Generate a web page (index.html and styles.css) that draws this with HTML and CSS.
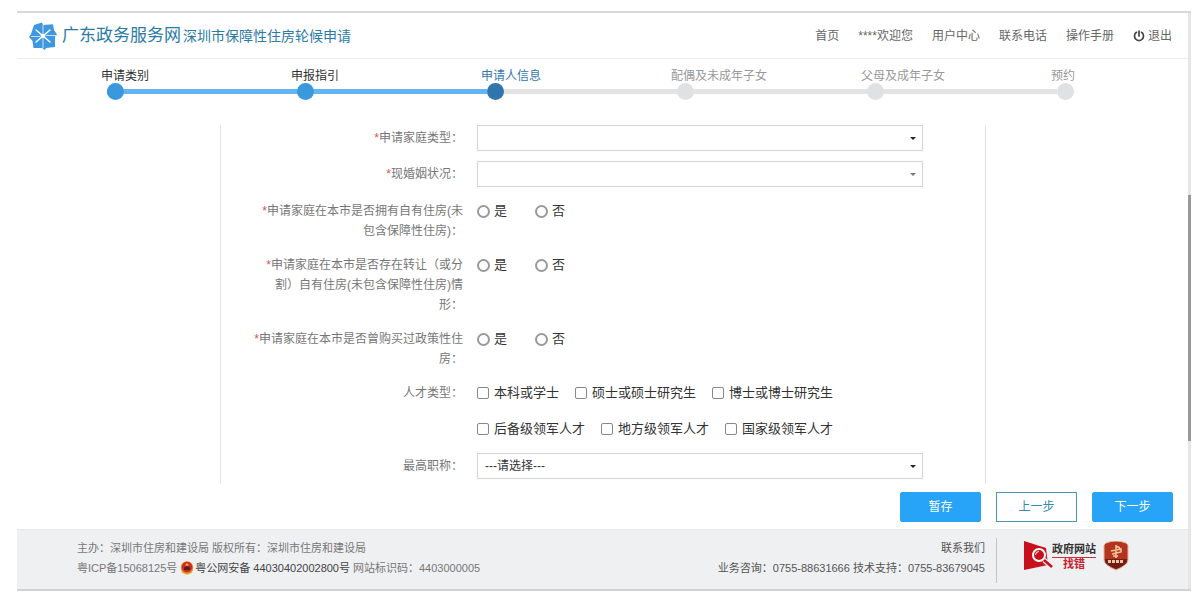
FILE: index.html
```
<!DOCTYPE html>
<html lang="zh-CN">
<head>
<meta charset="utf-8">
<title>深圳市保障性住房轮候申请</title>
<link rel="stylesheet" href="styles.css">
</head>
<body>
<div class="window">
  <div class="page">
    <header class="header">
      <div class="brand">
        <svg class="brand-logo" viewBox="0 0 28 28" aria-hidden="true">
          <path fill="#3f97e0" d="M5 3 13 .5 14 3 24 2.300 25 8 28 12.500 26 14.500V25l-9 1-1 2-3-2H4.500L3.500 19 0 15l2-3z"/>
          <path stroke="#fff" stroke-width=".7" d="M14 3v8M14 17v9M2 14.500h9M17 13.500h10"/>
          <path stroke="#fff" stroke-width="1.400" stroke-linecap="round" d="m7 8 14 12M21 8 7 20"/>
          <circle cx="14" cy="14" r="2.400" fill="#fff"/>
        </svg>
        <span class="brand-name">广东政务服务网</span>
        <h1 class="brand-title">深圳市保障性住房轮候申请</h1>
      </div>
      <nav class="nav">
        <a href="#">首页</a>
        <a href="#">****欢迎您</a>
        <a href="#">用户中心</a>
        <a href="#">联系电话</a>
        <a href="#">操作手册</a>
        <a href="#" class="logout"><svg class="power" viewBox="0 0 12 12" aria-hidden="true"><path d="M3.500 2.300a4.500 4.500 0 1 0 5 0M6 1v5" fill="none" stroke="#444" stroke-width="1.700" stroke-linecap="round"/></svg>退出</a>
      </nav>
    </header>

    <ol class="steps">
      <li class="step done"><span class="step-label">申请类别</span><span class="track"><i class="dot"></i></span></li>
      <li class="step done"><span class="step-label">申报指引</span><span class="track"><i class="dot"></i></span></li>
      <li class="step current"><span class="step-label">申请人信息</span><span class="track"><i class="dot"></i></span></li>
      <li class="step"><span class="step-label">配偶及未成年子女</span><span class="track"><i class="dot"></i></span></li>
      <li class="step"><span class="step-label">父母及成年子女</span><span class="track"><i class="dot"></i></span></li>
      <li class="step last"><span class="step-label">预约</span><span class="track"><i class="dot"></i></span></li>
    </ol>

    <main class="main">
      <form class="form" id="apply">
        <div class="row tight">
          <label class="label" for="family"><b>*</b>申请家庭类型：</label>
          <div class="select"><select id="family"><option></option></select><svg class="caret" viewBox="0 0 6 3" aria-hidden="true"><path d="M0 0h6L3 3z"/></svg></div>
        </div>
        <div class="row">
          <label class="label" for="marriage"><b>*</b>现婚姻状况：</label>
          <div class="select"><select id="marriage"><option></option></select><svg class="caret muted" viewBox="0 0 6 3" aria-hidden="true"><path d="M0 0h6L3 3z"/></svg></div>
        </div>
        <div class="row" role="radiogroup" aria-labelledby="q1">
          <span class="label" id="q1"><b>*</b>申请家庭在本市是否拥有自有住房(未包含保障性住房)：</span>
          <div class="radios"><label class="choice"><input type="radio" name="own">是</label><label class="choice"><input type="radio" name="own">否</label></div>
        </div>
        <div class="row" role="radiogroup" aria-labelledby="q2">
          <span class="label" id="q2"><b>*</b>申请家庭在本市是否存在转让（或分割）自有住房(未包含保障性住房)情形：</span>
          <div class="radios"><label class="choice"><input type="radio" name="transfer">是</label><label class="choice"><input type="radio" name="transfer">否</label></div>
        </div>
        <div class="row" role="radiogroup" aria-labelledby="q3">
          <span class="label" id="q3"><b>*</b>申请家庭在本市是否曾购买过政策性住房：</span>
          <div class="radios"><label class="choice"><input type="radio" name="policy">是</label><label class="choice"><input type="radio" name="policy">否</label></div>
        </div>
        <div class="row" role="group" aria-labelledby="q4">
          <span class="label" id="q4">人才类型：</span>
          <div class="checks">
            <div class="check-line"><label class="choice"><input type="checkbox">本科或学士</label><label class="choice"><input type="checkbox">硕士或硕士研究生</label><label class="choice"><input type="checkbox">博士或博士研究生</label></div>
            <div class="check-line"><label class="choice"><input type="checkbox">后备级领军人才</label><label class="choice"><input type="checkbox">地方级领军人才</label><label class="choice"><input type="checkbox">国家级领军人才</label></div>
          </div>
        </div>
        <div class="row">
          <label class="label" for="title">最高职称：</label>
          <div class="select"><select id="title"><option>---请选择---</option></select><svg class="caret" viewBox="0 0 6 3" aria-hidden="true"><path d="M0 0h6L3 3z"/></svg></div>
        </div>
      </form>
      <div class="actions">
        <button class="btn" type="button">暂存</button>
        <button class="btn outline" type="button">上一步</button>
        <button class="btn" type="submit" form="apply">下一步</button>
      </div>
    </main>

    <footer class="footer">
      <div class="legal">
        <p>主办：深圳市住房和建设局 版权所有：深圳市住房和建设局</p>
        <p class="records"><span>粤ICP备15068125号</span>
          <a class="police" href="#"><svg class="police-badge" viewBox="0 0 14 14" aria-hidden="true"><path d="M1 8h12l-1 4-5 2-5-2z" fill="#f0bd4a"/><circle cx="7" cy="6.500" r="6.200" fill="#d98a2f"/><circle cx="7" cy="6" r="5.200" fill="#d02a1c"/><path d="M4 9V6.500L7 5l3 1.500V9z" fill="#5a1b2a"/><path d="M5 4.500 7 2l2 2.500z" fill="#f4c542"/></svg>粤公网安备 44030402002800号</a>
          <span>网站标识码：4403000005</span></p>
      </div>
      <div class="contact">
        <p>联系我们</p>
        <p>业务咨询：0755-88631666 技术支持：0755-83679045</p>
      </div>
      <div class="marks">
        <a class="report" href="#">
          <svg class="report-icon" viewBox="0 0 30 30" aria-hidden="true"><path d="M0 0 22 7 24 24 0 29z" fill="#c8101c"/><circle cx="15" cy="14" r="6" fill="none" stroke="#fff" stroke-width="2"/><path d="M11.500 14a3.500 3.500 0 0 1 3.500-3.500" fill="none" stroke="#fff" stroke-width="1"/><path d="m20 19 8 7" stroke="#f0f0f2" stroke-width="5"/><path d="m20 19 8 7" stroke="#c8101c" stroke-width="2.600"/></svg>
          <span class="report-text"><span class="report-top">政府网站</span><span class="report-bottom">找错</span></span>
        </a>
        <svg class="shield" viewBox="0 0 26 30" role="img" aria-label="党政机关"><path d="M3 2Q13-2 23 2l2 2v15q0 5-12 10Q1 24 1 19V4z" fill="#b5341f" stroke="#e3b9a0" stroke-width="1"/><path d="M2 18h22v2q-1 4-11 8Q3 24 2 20z" fill="#6d1f15"/><path d="M13 4v13M8 10l10-2v3l-9 2M13 5l4 2M10 15h5" fill="none" stroke="#f1c9a0" stroke-width="1.500"/><path d="M5 20.500h16" stroke="#e8c4a8" stroke-width="3" stroke-dasharray="3 1"/></svg>
      </div>
    </footer>
  </div>
  <div class="scrollbar"><div class="thumb"></div></div>
</div>
</body>
</html>
```

FILE: styles.css
```
* { box-sizing: border-box; }

body {
  margin: 0;
  padding: 11px 9px 12px 17px;
  background: #fff;
  color: #333;
  font: 12px/20px "Liberation Sans", "Noto Sans CJK SC", sans-serif;
}

p, h1, ol { margin: 0; padding: 0; }
a { color: inherit; text-decoration: none; }

.window {
  display: flex;
  border-top: 2px solid #d9d9d9;
  border-bottom: 2px solid #d2d2d2;
}
.page { flex: 1; min-width: 0; }

.scrollbar { width: 3px; background: #e6e6e6; display: grid; grid-template-rows: 182fr 245fr 148fr; }
.thumb { grid-row: 2; background: #999; }

/* Header */
.header {
  display: flex;
  align-items: center;
  justify-content: space-between;
  height: 46px;
  padding: 0 16px 0 12px;
  border-bottom: 1px solid #ececec;
}
.brand { display: flex; align-items: center; color: #2b7ba7; white-space: nowrap; }
.brand-logo { width: 28px; height: 28px; margin-right: 5px; }
.brand-name { font-size: 17px; margin-right: 2px; }
.brand-title { font-size: 14px; font-weight: 400; }
.nav { display: flex; gap: 19px; color: #666; white-space: nowrap; }
.logout { display: flex; align-items: center; gap: 3px; }
.power { width: 12px; height: 12px; }

/* Progress */
.steps {
  display: grid;
  grid-template-columns: repeat(5, 1fr) 56px;
  padding: 7px 81px 0 84px;
  list-style: none;
}
.step { color: #999; white-space: nowrap; }
.step-label { display: block; height: 17px; }
.track {
  display: flex;
  align-items: center;
  height: 17px;
  margin: 0 -6px 0 6px;
  background: linear-gradient(#e3e3e4, #e3e3e4) center / 100% 5px no-repeat;
}
.dot { width: 17px; height: 17px; border-radius: 50%; background: #e0e1e3; }
.last .track { background: none; }
.done { color: #333; }
.done .track { background-image: linear-gradient(#62b5f2, #62b5f2); }
.done .dot { background: #3a98dc; }
.current { color: #3279ad; }
.current .dot { background: #3075ae; }

/* Form */
.main { padding-top: 25px; }
.form {
  margin: 0 202px 0 203px;
  padding-bottom: 5px;
  border: solid #e2e2e2;
  border-width: 0 1px;
}
.row {
  display: grid;
  grid-template-columns: 210px minmax(0, 1fr);
  gap: 14px;
  padding: 0 62px 0 32px;
}
.row + .row { margin-top: 14px; }
.tight + .row { margin-top: 10px; }
.label { color: #777; text-align: right; }
label.label { line-height: 26px; }
.label b { color: #d9534f; font-weight: 400; }

.select { position: relative; }
.select select {
  appearance: none;
  display: block;
  width: 100%;
  height: 26px;
  padding: 0 20px 0 7px;
  border: 1px solid #d5d5d5;
  border-radius: 0;
  background: #fff;
  color: #333;
  font: inherit;
}
.caret { position: absolute; right: 7px; top: 12px; width: 6px; height: 3px; fill: #222; pointer-events: none; }
.muted { fill: #777; }

.radios { display: flex; gap: 28px; }
.checks { display: grid; gap: 16px; }
.check-line { display: flex; flex-wrap: wrap; column-gap: 16px; }
.choice { display: flex; align-items: center; gap: 4px; height: 20px; font-size: 13px; white-space: nowrap; }
.choice input { appearance: none; flex: none; margin: 0; width: 13px; height: 13px; background: #fff; }
.choice input[type="radio"] { border: 2px solid #999; border-radius: 50%; }
.choice input[type="checkbox"] { width: 12px; height: 12px; margin-right: 1px; border: 1px solid #888; border-radius: 2px; }
.choice input:checked { background: #3a98dc; }

.actions { display: flex; justify-content: flex-end; gap: 15px; padding: 8px 15px 7px; }
.btn {
  width: 81px;
  height: 30px;
  padding: 0;
  border: 1px solid #27a3f8;
  border-radius: 2px;
  background: #27a3f8;
  color: #fff;
  font: inherit;
}
.outline { border-color: #4a94b8; border-radius: 0; background: #fff; color: #3a87b0; }

/* Footer */
.footer {
  display: flex;
  padding: 8px 59px 6px 60px;
  border-top: 1px solid #e6e7e8;
  background: #eff0f2;
  color: #777;
  font-size: 11px;
  white-space: nowrap;
}
.legal { flex: 1; }
.records { display: flex; gap: 3px; }
.police { display: flex; align-items: center; gap: 1px; color: #444; }
.police-badge { width: 14px; height: 14px; }
.contact { padding-right: 11px; border-right: 1px solid #c2c2c2; color: #555; text-align: right; height: 45px; }
.marks { display: flex; align-items: flex-start; gap: 7px; padding: 3px 0 0 27px; }
.report { display: flex; }
.report-icon { width: 30px; height: 30px; }
.report-text { display: grid; margin-left: -2px; padding-top: 2px; line-height: 13px; font-weight: 700; text-align: center; }
.report-top { color: #333; border-bottom: 1px solid #c8303a; }
.report-bottom { color: #c8202c; }
.shield { width: 26px; height: 30px; }
```
